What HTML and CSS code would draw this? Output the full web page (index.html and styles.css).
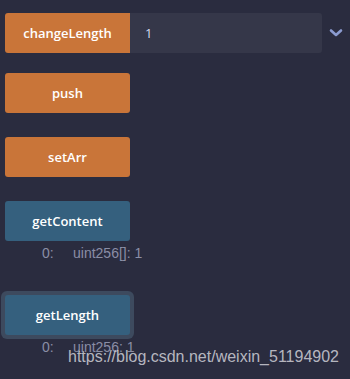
FILE: index.html
```html
<!DOCTYPE html>
<html>
<head>
<meta charset="utf-8">
<link rel="stylesheet" href="styles.css">
</head>
<body>
<div class="panel">
  <div class="row">
    <button class="btn orange joined">changeLength</button>
    <div class="input">1</div>
    <svg class="chev" width="14" height="10" viewBox="0 0 14 10"><path d="M2 2.5 L7 7 L12 2.5" fill="none" stroke="#8b9bd0" stroke-width="2.6" stroke-linecap="round" stroke-linejoin="round"/></svg>
  </div>
  <button class="btn orange b-push">push</button>
  <button class="btn orange b-set">setArr</button>
  <button class="btn blue b-content">getContent</button>
  <div class="result"><span class="idx">0:</span><span class="val">uint256[]: 1</span></div>
  <div class="ring"><button class="btn blue">getLength</button></div>
  <div class="result r2"><span class="idx">0:</span><span class="val">uint256: 1</span></div>
</div>
<div class="watermark">https://blog.csdn.net/weixin_51194902</div>
</body>
</html>
```
FILE: styles.css
```css
html, body {
  margin: 0;
  padding: 0;
  background: #2a2c3f;
  width: 350px;
  height: 379px;
  overflow: hidden;
  position: relative;
}
.panel {
  display: flex;
  flex-direction: column;
  align-items: flex-start;
  padding: 13px 0 0 5px;
}
.row {
  display: flex;
  align-items: center;
}
.btn {
  width: 125px;
  height: 40px;
  border: none;
  border-radius: 3px;
  color: #ffffff;
  font-family: "Open Sans", sans-serif;
  font-weight: 600;
  font-size: 13px;
  padding: 0;
  display: flex;
  align-items: center;
  justify-content: center;
}
.orange { background: #c97539; }
.blue { background: #35607e; }
.joined { border-radius: 3px 0 0 3px; }
.input {
  width: 177px;
  height: 40px;
  background: #353749;
  border-radius: 0 3px 3px 0;
  color: #d4dcf2;
  font-family: "Open Sans", sans-serif;
  font-size: 13px;
  display: flex;
  align-items: center;
  padding-left: 15px;
}
.chev { margin-left: 7px; }
.b-push { margin-top: 20px; }
.b-set { margin-top: 24px; }
.b-content { margin-top: 24px; }
.result {
  display: flex;
  font-family: "Liberation Sans", Arial, sans-serif;
  font-size: 14px;
  color: #8a8ea6;
  margin-top: 4px;
  line-height: 16px;
}
.idx { margin-left: 37px; width: 31px; }
.ring {
  margin-top: 30px;
  margin-left: -4px;
  padding: 4px;
  border-radius: 6px;
  background: #3d4a5e;
}
.r2 { margin-top: 0; }
.watermark {
  position: absolute;
  left: 68px;
  top: 348px;
  font-family: "Liberation Sans", Arial, sans-serif;
  font-size: 16px;
  color: rgba(220, 220, 225, 0.8);
  line-height: 18px;
}
```
